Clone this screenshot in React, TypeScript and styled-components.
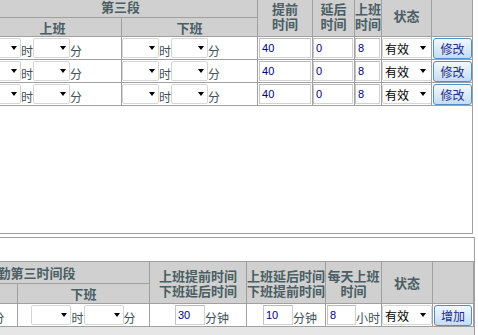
import styled, { createGlobalStyle } from "styled-components";

const GlobalStyle = createGlobalStyle`
  html, body {
    margin: 0;
    padding: 0;
    background: #ffffff;
  }
  body {
    font-family: "Liberation Sans", "Noto Sans CJK SC", sans-serif;
    font-size: 12px;
  }
`;

const Page = styled.div`
  width: 478px;
  height: 335px;
  overflow: hidden;
  display: flex;
  flex-direction: column;
`;

const TopPane = styled.div`
  width: 473px;
  height: 234px;
  box-sizing: border-box;
  border-right: 1px solid #a0a0a0;
  border-bottom: 1px solid #a0a0a0;
  overflow: hidden;
`;

const BottomPane = styled.div`
  flex: 1;
  width: 475px;
  margin-top: 3px;
  box-sizing: border-box;
  border-top: 1px solid #a0a0a0;
  border-right: 1px solid #a0a0a0;
  padding-top: 23px;
  overflow: hidden;
  display: flex;
  flex-direction: column;
`;

const Footer = styled.div`
  flex: 1;
  background: #e6e6e6;
`;

const Grid = styled.table<{ $left: number; $top: number; $width: number }>`
  border-collapse: collapse;
  table-layout: fixed;
  width: ${(p) => p.$width}px;
  margin: ${(p) => p.$top}px 0 0 ${(p) => p.$left}px;
  flex-shrink: 0;
`;

const Row = styled.tr<{ $h: number }>`
  height: ${(p) => p.$h}px;
`;

const HeadCell = styled.th`
  background: #d0d0d0;
  color: #4a5e64;
  font-family: "Noto Sans CJK SC", sans-serif;
  font-weight: 700;
  font-size: 13px;
  line-height: 15px;
  border: 1px solid #a0a0a0;
  padding: 0;
  text-align: center;
  vertical-align: middle;
  white-space: nowrap;
  overflow: hidden;
`;

const DataCell = styled.td<{ $center?: boolean; $pad?: number }>`
  border: 1px solid #a0a0a0;
  padding: 0 0 0 ${(p) => p.$pad ?? 0}px;
  vertical-align: middle;
  white-space: nowrap;
  overflow: hidden;
`;

const Fields = styled.div<{ $center?: boolean }>`
  display: flex;
  align-items: center;
  justify-content: ${(p) => (p.$center ? "center" : "flex-start")};
`;

const Unit = styled.span`
  font-family: "Noto Sans CJK SC", sans-serif;
  font-size: 12px;
  line-height: 14px;
  padding-top: 6px;
  color: #3f5057;
`;

const DropWrap = styled.span<{ $w: number; $arrow: number }>`
  position: relative;
  display: inline-block;
  width: ${(p) => p.$w}px;
  height: 20px;
  flex-shrink: 0;
  &::after {
    content: "";
    position: absolute;
    right: ${(p) => p.$arrow}px;
    top: 8px;
    border-left: 3.5px solid transparent;
    border-right: 3.5px solid transparent;
    border-top: 4px solid #000000;
    pointer-events: none;
  }
`;

const DropSelect = styled.select`
  appearance: none;
  width: 100%;
  height: 100%;
  box-sizing: border-box;
  margin: 0;
  border: 1px solid #d6d6d6;
  border-radius: 2px;
  background: #ffffff;
  font-family: "Noto Sans CJK SC", sans-serif;
  font-size: 12px;
  color: #000000;
  padding: 0 0 0 2px;
  outline: none;
`;

const NumInput = styled.input<{ $w: number }>`
  width: ${(p) => p.$w}px;
  height: 20px;
  box-sizing: border-box;
  flex-shrink: 0;
  margin: 0;
  padding: 0 0 0 2px;
  border: 1px solid #d2d2d2;
  border-top-color: #b9b9b9;
  border-left-color: #c4c4c4;
  font-family: "Liberation Sans", sans-serif;
  font-size: 11px;
  color: #000080;
  outline: none;
`;

const ActionButton = styled.button<{ $w: number }>`
  width: ${(p) => p.$w}px;
  height: 21px;
  box-sizing: border-box;
  margin: 0;
  padding: 0;
  border: 1px solid #4f8fcb;
  border-radius: 3px;
  background: linear-gradient(#f3f8fd, #c6dcf2);
  color: #1a2e8c;
  font-family: "Noto Sans CJK SC", sans-serif;
  font-size: 12px;
  line-height: 19px;
`;

const TOP_COLS = [138, 136, 55, 42, 27, 50, 41];
const BOTTOM_COLS = [130, 132, 97, 79, 56, 51, 41];

function Dropdown({ w, arrow, value }: { w: number; arrow: number; value?: string }) {
  return (
    <DropWrap $w={w} $arrow={arrow}>
      <DropSelect defaultValue={value ?? ""}>
        <option value="">{""}</option>
        <option value="有效">有效</option>
        <option value="无效">无效</option>
      </DropSelect>
    </DropWrap>
  );
}

function TimePair({ w, center }: { w: number; center?: boolean }) {
  return (
    <Fields $center={center}>
      <Dropdown w={w} arrow={4} />
      <Unit>时</Unit>
      <Dropdown w={w} arrow={4} />
      <Unit>分</Unit>
    </Fields>
  );
}

function Cols({ widths }: { widths: number[] }) {
  return (
    <colgroup>
      {widths.map((w, i) => (
        <col key={i} style={{ width: w }} />
      ))}
    </colgroup>
  );
}

const sum = (a: number[]) => a.reduce((s, n) => s + n, 0);

export default function App() {
  const rows = [0, 1, 2];
  return (
    <Page>
      <GlobalStyle />
      <TopPane>
        <Grid $left={-17} $top={-6} $width={sum(TOP_COLS)}>
          <Cols widths={TOP_COLS} />
          <thead>
            <Row $h={23}>
              <HeadCell colSpan={2}>第三段</HeadCell>
              <HeadCell rowSpan={2}>提前<br />时间</HeadCell>
              <HeadCell rowSpan={2}>延后<br />时间</HeadCell>
              <HeadCell rowSpan={2}>上班<br />时间</HeadCell>
              <HeadCell rowSpan={2}>状态</HeadCell>
              <HeadCell rowSpan={2}></HeadCell>
            </Row>
            <Row $h={19}>
              <HeadCell>上班</HeadCell>
              <HeadCell>下班</HeadCell>
            </Row>
          </thead>
          <tbody>
            {rows.map((r) => (
              <Row $h={23} key={r}>
                <DataCell><TimePair w={37} /></DataCell>
                <DataCell><TimePair w={37} /></DataCell>
                <DataCell $pad={1}><Fields><NumInput $w={52} defaultValue="40" /></Fields></DataCell>
                <DataCell $pad={0}><Fields><NumInput $w={40} defaultValue="0" /></Fields></DataCell>
                <DataCell $pad={0}><Fields><NumInput $w={25} defaultValue="8" /></Fields></DataCell>
                <DataCell><Fields><Dropdown w={50} arrow={6} value="有效" /></Fields></DataCell>
                <DataCell $pad={1}><Fields><ActionButton $w={39}>修改</ActionButton></Fields></DataCell>
              </Row>
            ))}
          </tbody>
        </Grid>
      </TopPane>
      <BottomPane>
        <Grid $left={-113} $top={0} $width={sum(BOTTOM_COLS)}>
          <Cols widths={BOTTOM_COLS} />
          <thead>
            <Row $h={22}>
              <HeadCell colSpan={2} style={{ paddingLeft: 23 }}>考勤第三时间段</HeadCell>
              <HeadCell rowSpan={2}>上班提前时间<br />下班延后时间</HeadCell>
              <HeadCell rowSpan={2}>上班延后时间<br />下班提前时间</HeadCell>
              <HeadCell rowSpan={2}>每天上班<br />时间</HeadCell>
              <HeadCell rowSpan={2}>状态</HeadCell>
              <HeadCell rowSpan={2}></HeadCell>
            </Row>
            <Row $h={20}>
              <HeadCell>上班</HeadCell>
              <HeadCell>下班</HeadCell>
            </Row>
          </thead>
          <tbody>
            <Row $h={23}>
              <DataCell><TimePair w={40} center /></DataCell>
              <DataCell><TimePair w={40} center /></DataCell>
              <DataCell $pad={8}><Fields $center><NumInput $w={30} defaultValue="30" /><Unit>分钟</Unit></Fields></DataCell>
              <DataCell $pad={8}><Fields $center><NumInput $w={30} defaultValue="10" /><Unit>分钟</Unit></Fields></DataCell>
              <DataCell><Fields $center><NumInput $w={29} defaultValue="8" /><Unit>小时</Unit></Fields></DataCell>
              <DataCell><Fields><Dropdown w={50} arrow={6} value="有效" /></Fields></DataCell>
              <DataCell $pad={1}><Fields><ActionButton $w={38}>增加</ActionButton></Fields></DataCell>
            </Row>
          </tbody>
        </Grid>
        <Footer />
      </BottomPane>
    </Page>
  );
}
